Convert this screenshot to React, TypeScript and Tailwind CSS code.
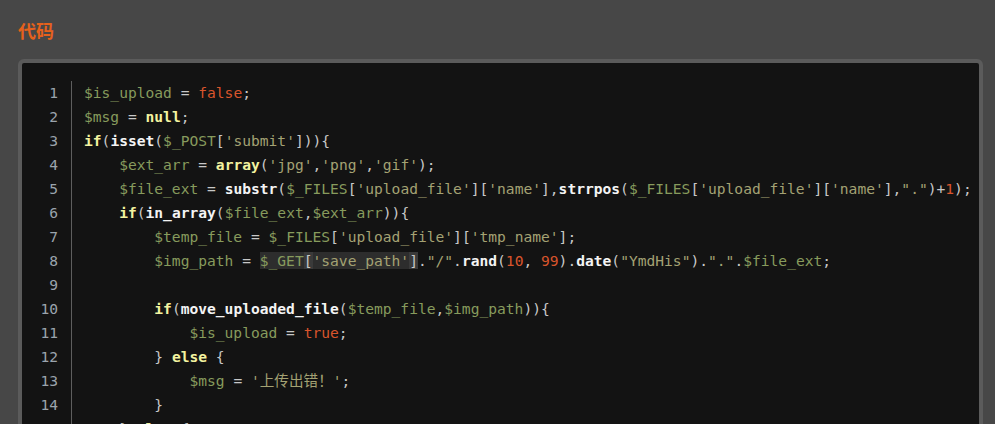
import React from "react";

type Tok = { t: string; s: string };

const KW = new Set(["if", "else", "null", "array"]);
const LIT = new Set(["true", "false"]);

function tokenize(src: string): Tok[] {
  const re = /(\$\w+)|('[^']*'|"[^"]*")|(\d+)|([A-Za-z_]\w*)|(\s+)|(.)/g;
  const out: Tok[] = [];
  let m: RegExpExecArray | null;
  while ((m = re.exec(src)) !== null) {
    if (m[1]) out.push({ t: "var", s: m[1] });
    else if (m[2]) out.push({ t: "str", s: m[2] });
    else if (m[3]) out.push({ t: "num", s: m[3] });
    else if (m[4]) {
      if (KW.has(m[4])) out.push({ t: "kw", s: m[4] });
      else if (LIT.has(m[4])) out.push({ t: "num", s: m[4] });
      else out.push({ t: "fn", s: m[4] });
    } else if (m[5]) out.push({ t: "ws", s: m[5] });
    else out.push({ t: "p", s: m[6] });
  }
  return out;
}

const COLOR: Record<string, string> = {
  var: "text-[#879b5d]",
  str: "text-[#a4a273]",
  num: "text-[#d9552c]",
  kw: "text-[#f3f3a0] font-bold",
  fn: "text-[#f4f4f4] font-bold",
  ws: "",
  p: "text-[#c8c8c8]",
};

function Toks({ src, hl }: { src: string; hl?: boolean }) {
  return (
    <>
      {tokenize(src).map((k, i) => {
        let cls = COLOR[k.t];
        if (hl) {
          cls += k.s === "[" || k.s === "]" ? " bg-[#3a3a3a]" : " bg-[#2d2d2d]";
        }
        return (
          <span key={i} className={cls}>
            {k.s}
          </span>
        );
      })}
    </>
  );
}

const LINES: (string | [string, string, string])[] = [
  "$is_upload = false;",
  "$msg = null;",
  "if(isset($_POST['submit'])){",
  "    $ext_arr = array('jpg','png','gif');",
  "    $file_ext = substr($_FILES['upload_file']['name'],strrpos($_FILES['upload_file']['name'],\".\")+1);",
  "    if(in_array($file_ext,$ext_arr)){",
  "        $temp_file = $_FILES['upload_file']['tmp_name'];",
  [
    "        $img_path = ",
    "$_GET['save_path']",
    ".\"/\".rand(10, 99).date(\"YmdHis\").\".\".$file_ext;",
  ],
  "",
  "        if(move_uploaded_file($temp_file,$img_path)){",
  "            $is_upload = true;",
  "        } else {",
  "            $msg = '上传出错！';",
  "        }",
  "    } else {",
];

export default function App() {
  return (
    <div className="h-[424px] w-full overflow-hidden bg-[#474747]">
      <div
        className="pl-[18px] pt-[18px] text-[18px] font-bold leading-[24px] text-[#e5611c]"
        style={{ fontFamily: '"Noto Sans CJK SC", "Noto Sans", sans-serif' }}
      >
        代码
      </div>
      <div className="ml-[18px] mr-[12px] mt-[17px] rounded-[6px] border-4 border-[#5b5b5b] bg-[#131313] pt-[18px]">
        <div
          className="flex text-[14.6px] leading-[24px] whitespace-pre"
          style={{ fontFamily: '"DejaVu Sans Mono", "Noto Sans CJK SC", monospace' }}
        >
          <div className="w-[50px] shrink-0 border-r border-[#5e5e5e] pr-[13px] text-right text-[#9ba4ad]">
            {LINES.map((_, i) => (
              <div key={i} className="h-[24px]">
                {i + 1}
              </div>
            ))}
          </div>
          <div className="pl-[12px] overflow-hidden">
            {LINES.map((ln, i) => (
              <div key={i} className="h-[24px]">
                {typeof ln === "string" ? (
                  <Toks src={ln} />
                ) : (
                  <>
                    <Toks src={ln[0]} />
                    <Toks src={ln[1]} hl />
                    <Toks src={ln[2]} />
                  </>
                )}
              </div>
            ))}
          </div>
        </div>
      </div>
    </div>
  );
}
